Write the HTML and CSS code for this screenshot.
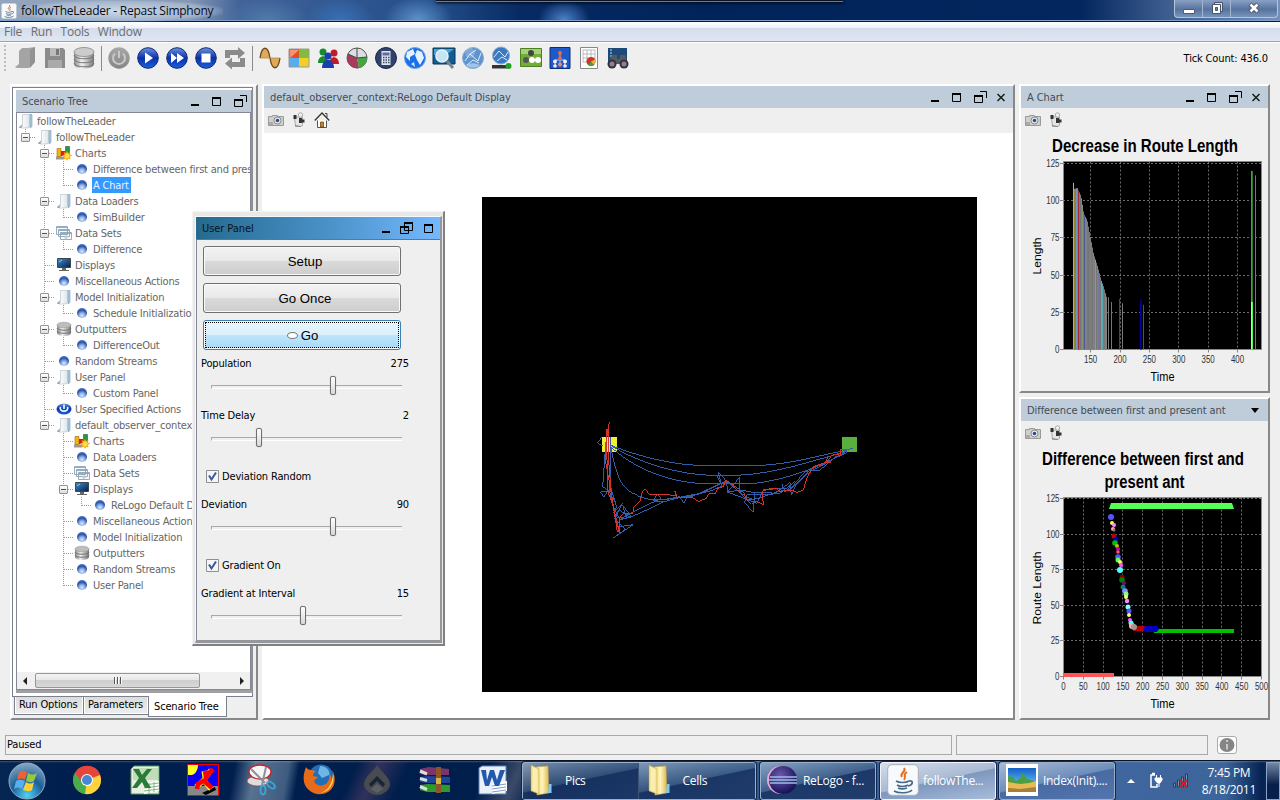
FILE: index.html
```html
<!DOCTYPE html>
<html lang="en">
<head>
<meta charset="utf-8">
<title>followTheLeader - Repast Simphony</title>
<link rel="stylesheet" href="styles.css">
</head>
<body>
<svg class="defs" width="0" height="0">
  <defs>
    <radialGradient id="gBall" cx=".5" cy=".75" r=".75"><stop offset="0" stop-color="#d8eaff"/><stop offset=".35" stop-color="#8db2e6"/><stop offset=".7" stop-color="#2d55ac"/><stop offset="1" stop-color="#5478c0"/></radialGradient>
    <linearGradient id="gBlue" x2="0" y2="1"><stop offset="0" stop-color="#6d94e0"/><stop offset=".5" stop-color="#0a2fa8"/><stop offset="1" stop-color="#1c62e0"/></linearGradient>
    <linearGradient id="gGrey" x2="0" y2="1"><stop offset="0" stop-color="#a8a8a8"/><stop offset="1" stop-color="#858585"/></linearGradient>
    <linearGradient id="gDisk" x2="1" y2="0"><stop offset="0" stop-color="#8a8a8a"/><stop offset=".4" stop-color="#f2f2f2"/><stop offset="1" stop-color="#777"/></linearGradient>
    <linearGradient id="gPage" x2="1" y2="0"><stop offset="0" stop-color="#fff"/><stop offset="1" stop-color="#dfe4e8"/></linearGradient>
    <linearGradient id="gSky" x2="0" y2="1"><stop offset="0" stop-color="#1460c8"/><stop offset=".55" stop-color="#4fa8ea"/><stop offset="1" stop-color="#b8e2fa"/></linearGradient>
    <linearGradient id="gFolder" x2="1" y2="0"><stop offset="0" stop-color="#f6e391"/><stop offset=".5" stop-color="#fff3b5"/><stop offset="1" stop-color="#dcb64f"/></linearGradient>
    <radialGradient id="gOrb" cx=".5" cy=".9" r=".9"><stop offset="0" stop-color="#4fd2f4"/><stop offset=".5" stop-color="#1c5f98"/><stop offset="1" stop-color="#86a9c4"/></radialGradient>
    <radialGradient id="gEcl" cx=".4" cy=".35" r=".7"><stop offset="0" stop-color="#6d5aa8"/><stop offset="1" stop-color="#110c55"/></radialGradient>
    <linearGradient id="gMon" x2="1" y2="1"><stop offset="0" stop-color="#3d8fd0"/><stop offset="1" stop-color="#061c44"/></linearGradient>
    <symbol id="ball" viewBox="0 0 16 16"><circle cx="8" cy="8" r="5" fill="url(#gBall)"/></symbol>
    <symbol id="page" viewBox="0 0 16 16"><path d="M4.500 1.500H12v11l-2 2.500H3l1.500-2z" fill="url(#gPage)" stroke="#bcc2c8" stroke-width=".7"/><path d="M12 1.500h2v12L12 15z" fill="#a9c9e2" stroke="#7d9db8" stroke-width=".6"/><path d="M1 14l3-2.500-.5 3.500H1.500z" fill="#9ba3aa"/></symbol>
    <symbol id="charts" viewBox="0 0 16 16"><path d="M0 11.500h8v3H0z" fill="#999"/><path d="M1 3.500h4v8H1z" fill="#f3b50c" stroke="#a26a00" stroke-width=".6"/><path d="M5 6h4v5H5z" fill="#d81d10"/><path d="M9.500 1.500h4v8h-4z" fill="#289445" stroke="#14632b" stroke-width=".6"/><path d="M11 6.500l1 2 2-1-.7 2.200 2.200.8-2.200 1.200.7 2.300-2-.8-1 2-1-2-2 .8.700-2.300-2.200-1.200 2.200-.8L8 7.500l2 1z" fill="#ffe038" stroke="#f09000" stroke-width=".7"/></symbol>
    <symbol id="sets" viewBox="0 0 16 16"><g fill="#f8fafc" stroke="#8ba3b6" stroke-width=".9"><path d="M.5 1.500h11v8H.5zM2.500 4.500h11v7h-11zM4.500 7.500h11v7h-11z"/><path d="M1 2.500h10M3 5.500h10M5 8.500h10"/></g><circle cx="10" cy="12" r="1.800" fill="#c0c9d0"/></symbol>
    <symbol id="monitor" viewBox="0 0 16 16"><path d="M1.500 1.500h13v9h-13z" fill="url(#gMon)" stroke="#394653"/><path d="M3 5l3-2" stroke="#8cd" /><path d="M6 11h4v2h3v1H3v-1h3z" fill="#666"/></symbol>
    <symbol id="db" viewBox="0 0 16 16"><path d="M1 4v8c0 4 14 4 14 0V4z" fill="url(#gDisk)"/><path d="M1 7c0 3 14 3 14 0M1 10c0 3 14 3 14 0" fill="none" stroke="#707070"/><ellipse cx="8" cy="4" rx="7" ry="2.800" fill="#bdbdbd" stroke="#999" stroke-width=".6"/></symbol>
    <symbol id="power" viewBox="0 0 16 16"><ellipse cx="8" cy="8" rx="7.500" ry="5.500" fill="url(#gBlue)"/><path d="M4.500 6c-2 5.500 9 5.500 7 0M8 3.500v4.500" fill="none" stroke="#dff" stroke-width="1.700"/></symbol>
    <symbol id="camera" viewBox="0 0 16 12"><path d="M.5 2.500h4V1.500h5v1h6v9H.5z" fill="#cfcfcf" stroke="#9a9a9a"/><circle cx="9.500" cy="6.500" r="3.500" fill="#eee" stroke="#888"/><circle cx="9.500" cy="6.500" r="1.800" fill="#234f9a"/><path d="M1 8h4v3H1z" fill="#aaa"/></symbol>
    <symbol id="film" viewBox="0 0 14 16"><path d="M2.500 5h8v8.500l-2 1h-5z" fill="#e6e6e6" stroke="#a8a8a8"/><path d="M1.500 3h3v4h-3z" fill="#333"/><circle cx="8.500" cy="3" r="2.200" fill="#f2f2f2" stroke="#aaa"/><path d="M7 6h3v5H7zM10 7.500h2.500v3H10z" fill="#333"/><path d="M3 13.500l6 1" stroke="#888"/></symbol>
    <symbol id="home" viewBox="0 0 16 16"><path d="M3.500 8v7.500h9V8" fill="#fff" stroke="#555"/><path d="M.7 8.500L8 1l7.300 7.500" fill="#f6efe4" stroke="#333" stroke-width="1.300"/><path d="M11 1.500h2v4" fill="none" stroke="#444"/><path d="M6.500 10h3v5h-3z" fill="#c78430" stroke="#653900" stroke-width=".7"/></symbol>
    <symbol id="min" viewBox="0 0 12 12"><path d="M2 10h8" stroke="#000" stroke-width="2"/></symbol>
    <symbol id="max" viewBox="0 0 12 12"><path d="M1.500 2.500h8v8h-8z" fill="none" stroke="#000"/><path d="M1 3h9" stroke="#000" stroke-width="2"/></symbol>
    <symbol id="out" viewBox="0 0 14 14"><path d="M1.500 5.500h8v7h-8zM7 1.500h6.500V8" fill="none" stroke="#000"/><path d="M1 6h9" stroke="#000" stroke-width="2"/></symbol>
    <symbol id="restore" viewBox="0 0 14 14"><path d="M.5 5.500h8v7h-8zM4.500 1.500h8v8h-8z" fill="none" stroke="#000"/><path d="M0 6h9M4 2h9" stroke="#000" stroke-width="2"/></symbol>
    <symbol id="close" viewBox="0 0 12 12"><path d="M2.500 3l7 7m0-7l-7 7" stroke="#132113" stroke-width="1.500"/></symbol>
    <symbol id="folder" viewBox="0 0 24 32"><path d="M7 3l12-1 1 27-12 2z" fill="url(#gFolder)" stroke="#c6a44a" stroke-width=".5"/><path d="M2 1l8 4v25l-8-3z" fill="#f7e69a" stroke="#b99437" stroke-width=".5"/><path d="M4 3l4 2v22l-4-1z" fill="#fff6c6" opacity=".5"/><path d="M20 20h2.500v9H19z" fill="#7ecbf0"/></symbol>
    <symbol id="java" viewBox="0 0 32 32"><rect x=".7" y=".7" width="30.600" height="30.600" rx="4" fill="#f7f9fb" stroke="#a7b2bd"/><path d="M17 4c3 4-5 5-2 9M20 8c-5 3 0 4-3 8" fill="none" stroke="#e76e20" stroke-width="2"/><path d="M9 17c3 2 10 2 13 0M10 21c3 2 8 2 11 0M11 24c2 1 6 1 9 0M22 17c5-1 4 4-1 5M7 27c5 3 15 2 18-1" fill="none" stroke="#436b8d" stroke-width="1.600"/></symbol>
  </defs>
</svg>

<header class="titlebar">
  <svg class="app-icon" width="16" height="18"><use href="#java"/></svg>
  <h1>followTheLeader - Repast Simphony</h1>
  <div class="dock-edge"></div>
  <div class="caption">
    <span><svg width="14" height="14"><path d="M1.500 7.500h11v4h-11z" fill="#fff" stroke="#555b6c"/></svg></span>
    <span><svg width="14" height="14"><path d="M4.500 .5h8v9h-8z" fill="#dfe5ef" stroke="#4b5369"/><path d="M2.500 2.500h8v9h-8z" fill="#fff" stroke="#4b5369"/><path d="M5.500 5.500h2v3h-2z" fill="#6784af" stroke="#4b5369"/></svg></span>
    <span class="wide"><svg width="14" height="14"><path d="M3 2l8 8m0-8l-8 8" stroke="#4b5369" stroke-width="4.500"/><path d="M3.500 2.500l7 7m0-7l-7 7" stroke="#fff" stroke-width="2.600"/></svg></span>
  </div>
</header>

<nav class="menubar"><span>File</span><span>Run</span><span>Tools</span><span>Window</span></nav>

<div class="toolbar">
  <i class="grip"></i>
  <svg class="t" viewBox="0 0 22 22"><path d="M4 4l3-3h6l7-1v15l-6 6H2l-2-1 4-3z" fill="#a4a4a4"/><path d="M15 3l5-3v15l-5 6z" fill="#929292"/></svg>
  <svg class="t" viewBox="0 0 22 22"><path d="M1 1h18l2 2v18H1z" fill="#8b8b8b"/><path d="M6 1h10v8H6z" fill="#bbb"/><path d="M12 2h3v6h-3z" fill="#777"/><path d="M4 13h14v8H4z" fill="#aaa"/></svg>
  <svg class="t" viewBox="0 0 22 22"><path d="M1 5v12c0 6 20 6 20 0V5z" fill="url(#gDisk)"/><path d="M1 8c0 5 20 5 20 0M1 12c0 5 20 5 20 0M1 16c0 5 20 5 20 0" fill="none" stroke="#777"/><ellipse cx="11" cy="5" rx="10" ry="4.500" fill="#ccc" stroke="#999"/></svg>
  <i class="sep"></i>
  <svg class="t" viewBox="0 0 22 22"><circle cx="11" cy="11" r="10.700" fill="url(#gGrey)"/><path d="M7 6.500a6 6 0 1 0 8 0M11 4v7" fill="none" stroke="#c9c9c9" stroke-width="2"/></svg>
  <svg class="t" viewBox="0 0 22 22"><circle cx="11" cy="11" r="10.300" fill="url(#gBlue)" stroke="#122b76"/><path d="M8 5.500v11l8-5.500z" fill="#fff"/></svg>
  <svg class="t" viewBox="0 0 22 22"><circle cx="11" cy="11" r="10.300" fill="url(#gBlue)" stroke="#122b76"/><path d="M5 6v10l6-5zM11 6v10l7-5z" fill="#fff"/></svg>
  <svg class="t" viewBox="0 0 22 22"><circle cx="11" cy="11" r="10.300" fill="url(#gBlue)" stroke="#122b76"/><path d="M6.500 6.500h9v9h-9z" fill="#fff"/></svg>
  <svg class="t" viewBox="0 0 22 22"><path d="M1 11V3h13V0l7 6-7 6V8H6v3zM21 11v9H8v2.500l-7-6 7-6V15h8v-4z" fill="#8b8b8b"/></svg>
  <i class="sep"></i>
  <svg class="t" viewBox="0 0 22 22"><path d="M1 11C3-2 9-2 11 11zM11 11c2 13 8 13 10 0z" fill="#dfaa58"/><path d="M1 11C3-2 9-2 11 11c2 13 8 13 10 0" fill="none" stroke="#68451a" stroke-width="1.300"/><path d="M1 11h20" stroke="#b58a4a" stroke-width=".8"/></svg>
  <svg class="t" viewBox="0 0 22 22"><path d="M1 2h10v9H1z" fill="#e44d27"/><path d="M11 2h10v9H11z" fill="#81bd3c"/><path d="M1 11h10v9H1z" fill="#55acf0"/><path d="M11 11h10v9H11z" fill="#f4cf27"/><path d="M1 2h20v18H1z" fill="none" stroke="#999"/><path d="M2 3h9l-9 8z" fill="#ffb191" opacity=".7"/></svg>
  <svg class="t" viewBox="0 0 22 22"><g fill="#188a31"><circle cx="6" cy="5" r="3.500"/><path d="M1 16c0-9 10-9 10 0z"/></g><g fill="#c01c25"><circle cx="17" cy="6" r="3.500"/><path d="M12 17c0-9 10-9 10 0z"/></g><g fill="#1c3fae"><circle cx="11" cy="9" r="3.600"/><path d="M5 21c0-11 12-11 12 0z"/></g></svg>
  <svg class="t" viewBox="0 0 22 22"><circle cx="11" cy="11" r="10" fill="#dcdee4" stroke="#555"/><path d="M11 11L2 7a10 10 0 0 0 11 14z" fill="#a83a5d"/><path d="M11 11l10-1a10 10 0 0 1-8 11z" fill="#43a642"/><path d="M11 1v10L2 7m9 4l10-1" fill="none" stroke="#444"/></svg>
  <svg class="t" viewBox="0 0 22 22"><circle cx="11" cy="11" r="10.500" fill="#30416c" stroke="#1b2749"/><path d="M6.500 4h9v14h-9z" fill="#dfe4ee"/><path d="M7.500 5.500h7v3h-7z" fill="#5c6f97"/><path d="M8 10.500h7M8 13h7M8 15.500h7" stroke="#3b4868" stroke-width="1.500" stroke-dasharray="1.500 1"/></svg>
  <svg class="t" viewBox="0 0 22 22"><circle cx="11" cy="11" r="10.500" fill="#1b70e6" stroke="#6fa3e6"/><path d="M3 5l6-3 2 5-5 3v4L2 10zM13 3l5 2 2 6-4 7-3-5-2-5z" fill="#e2f3ff"/><path d="M7 17l3-2 1 5z" fill="#cde7ff"/></svg>
  <svg class="t" viewBox="0 0 22 22"><path d="M0 1h22v16H0z" fill="#135c91" stroke="#0b365a"/><path d="M1 2h20l-8 6H1z" fill="#48a4d4"/><circle cx="9" cy="9" r="6" fill="#c6e4f4" stroke="#e9f2f7" stroke-width="1.600"/><path d="M14 14l6 7" stroke="#78848f" stroke-width="3"/></svg>
  <svg class="t" viewBox="0 0 22 22"><circle cx="11" cy="11" r="10.500" fill="#5e93ce" stroke="#8bacd0"/><path d="M3 14l5-7 8 7 3-8M5 18l6-5 6 3M8 7l6-4" fill="none" stroke="#dcecff"/><circle cx="8" cy="6" r="5" fill="#fff" opacity=".2"/><path d="M4 18a10 10 0 0 0 14 0 12 8 0 0 0-14 0z" fill="#cfe5fb" opacity=".6"/></svg>
  <svg class="t" viewBox="0 0 22 22"><circle cx="10" cy="8.500" r="8.500" fill="#397bc3" stroke="#8bacd0"/><path d="M3 10l5-6 6 6 3-5M6 14l5-4 5 3" fill="none" stroke="#dcecff"/><path d="M1 18h15v3.500H1z" fill="#333"/><circle cx="17.500" cy="19" r="3" fill="#20a325"/></svg>
  <svg class="t" viewBox="0 0 22 22"><path d="M.5 1.500h21v18H.5z" fill="#72ad3c" stroke="#4b8120"/><path d="M1 2h20v5H1z" fill="#a6d178"/><circle cx="11" cy="6" r="3" fill="#444"/><circle cx="6" cy="13" r="3" fill="#555"/><circle cx="12" cy="13" r="3" fill="#fff"/><circle cx="18" cy="13" r="3" fill="#fff"/></svg>
  <svg class="t" viewBox="0 0 22 22"><path d="M1 .5h20v21H1z" fill="#1d59c8" stroke="#0d2d79"/><path d="M11 6v12M6 13h10M6 13v5m10-5v5" stroke="#a9c8ff"/><g fill="#ee6a3c"><circle cx="11" cy="6" r="2"/><circle cx="11" cy="11.500" r="2"/></g><g fill="#eef"><circle cx="6" cy="14.500" r="2"/><circle cx="16" cy="14.500" r="2"/><circle cx="6" cy="19" r="1.800"/><circle cx="16" cy="19" r="1.800"/></g><circle cx="11" cy="17.500" r="2" fill="#ee8a6c"/></svg>
  <svg class="t" viewBox="0 0 22 22"><path d="M2.500.5h17v21h-17z" fill="#fff" stroke="#888"/><path d="M5 3h12v12H5zM9 3v12m4-12v12M5 7h12M5 11h12" fill="none" stroke="#aaa" stroke-width=".8"/><circle cx="13" cy="14.500" r="4.500" fill="#d3302a"/><path d="M13 14.500l4-2v4l-4 2z" fill="#e4b735"/><path d="M13 14.500l-3 3.500a5 5 0 0 0 6 0z" fill="#3fa43a"/></svg>
  <svg class="t" viewBox="0 0 22 22"><path d="M1 1h19v14H1z" fill="#1d4a78"/><path d="M3 3h2m-2 3h2m-2 3h2" stroke="#cde"/><path d="M5 8h5v4h3V8h5l3 9H1z" fill="#555b62"/><circle cx="5" cy="17" r="4.500" fill="#333"/><circle cx="17" cy="17" r="4.500" fill="#333"/><circle cx="5" cy="17" r="2.500" fill="#967aa2"/><circle cx="17" cy="17" r="2.500" fill="#967aa2"/></svg>
  <span class="ticks">Tick Count: 436.0</span>
</div>

<main class="desk">
  <section class="dock left">
    <div class="tabframe">
      <div class="pane">
        <div class="head"><span>Scenario Tree</span><svg><use href="#min"/></svg><svg><use href="#max"/></svg><svg class="big"><use href="#out"/></svg></div>
        <div class="treebox">
          <div class="tree" id="tree"></div>
          <div class="hscroll"><b class="arrow l"></b><div class="thumb"><i></i><i></i><i></i></div><b class="arrow r"></b></div>
        </div>
      </div>
    </div>
    <div class="tabs"><span>Run Options</span><span>Parameters</span><span class="on">Scenario Tree</span></div>
  </section>

  <section class="dock center">
    <div class="head"><span>default_observer_context:ReLogo Default Display</span><svg><use href="#min"/></svg><svg><use href="#max"/></svg><svg class="big"><use href="#out"/></svg><svg><use href="#close"/></svg></div>
    <div class="tools"><svg width="16" height="12"><use href="#camera"/></svg><svg width="14" height="16"><use href="#film"/></svg><svg width="16" height="16"><use href="#home"/></svg></div>
    <div class="stage">
      <svg width="495" height="495" viewBox="0 0 495 495">
        <path d="M0 0h495v495H0z"/>
        <path d="M120 240h15v15h-15z" fill="#f0f033"/><path d="M360 240h15v15h-15z" fill="#59b03c"/>
        <g transform="translate(98 213) scale(.33333)" fill="none" stroke="#345da9" stroke-width="3" shape-rendering="crispEdges">
          <path d="M90 105C190 145 290 166 370 166H540C640 162 740 130 786 124L818 115"/>
          <path d="M90 105C170 155 290 196 410 196H470C600 190 700 150 800 124"/>
          <path d="M90 108C160 175 270 222 400 222H500C620 214 730 165 800 124"/>
          <path d="M92 110C105 175 118 220 140 236 165 260 200 270 240 270 290 266 310 258 340 254 380 250 400 225 440 215 470 235 490 262 520 268 560 260 590 240 630 240 660 215 680 185 720 170L800 124"/>
          <path d="M92 80V190L88 240 100 290 120 330 150 310 190 290 230 272 250 276 300 262 340 258 440 212 480 240 524 248 520 307 494 278 500 255 575 255 630 218 634 256 650 220 690 180 800 128"/>
          <path d="M66 82L52 98 68 108M76 120L68 230 92 245 62 246 72 262 84 240 105 275 92 232 110 290 100 310 128 280 105 320 140 325 128 286 155 320 118 330 120 350 160 344 100 384 136 358 104 326 118 300 150 322 200 300 250 276 220 272 232 252 246 270 300 260 311 280 320 262 400 240 425 228 415 186 438 212 444 245 478 202 480 240 442 246 500 268 524 268 523 247 600 250 645 214 615 245 606 223"/>
          <path d="M410 195L428 232 438 210 500 268 530 280 550 240 600 235 630 238 675 184 720 180 770 138"/>
          <g stroke="#d5332d"><path d="M88 37L78 95 76 150 94 250 112 366 118 365 95 270 86 150 85 60 80 58 82 240 100 290 118 368 120 320 130 310 158 310 162 290 182 272 184 250 196 236 206 252 290 256 284 242 290 262H336L356 274 378 266 386 252H406L412 236 430 230 438 210 460 226 470 240 490 246 500 268 515 283 524 272 550 284 546 244 570 236H590L600 244 636 240 650 248 670 240 680 206 700 170 740 156 755 136 770 132 780 136 782 116 786 120H804M745 140L736 155 752 158"/></g>
        </g>
      </svg>
    </div>
  </section>

  <div class="right">
    <section class="dock chart-a">
      <div class="head"><span>A Chart</span><svg><use href="#min"/></svg><svg><use href="#max"/></svg><svg class="big"><use href="#out"/></svg><svg><use href="#close"/></svg></div>
      <div class="tools"><svg width="16" height="12"><use href="#camera"/></svg><svg width="14" height="16"><use href="#film"/></svg></div>
      <svg class="chart" id="chartA" width="247" height="257" viewBox="1021 134 247 257"></svg>
    </section>
    <section class="dock chart-b">
      <div class="head combo"><span>Difference between first and present ant</span><i></i></div>
      <div class="tools"><svg width="16" height="12"><use href="#camera"/></svg><svg width="14" height="16"><use href="#film"/></svg></div>
      <svg class="chart" id="chartB" width="247" height="270" viewBox="1021 447 247 270"></svg>
    </section>
  </div>
</main>

<aside class="panel">
  <div class="panel-in">
    <div class="head active"><span>User Panel</span><svg><use href="#min"/></svg><svg class="big"><use href="#restore"/></svg><svg><use href="#max"/></svg></div>
    <div class="form">
      <button>Setup</button><button>Go Once</button><button class="hot"><i></i>Go</button>
      <div class="val"><span>Population</span><span>275</span></div><div class="slider"><i style="left:119px"></i></div>
      <div class="val"><span>Time Delay</span><span>2</span></div><div class="slider"><i style="left:45px"></i></div>
      <div class="check"><svg width="13" height="13"><path d="M.5.5h12v12H.5z" fill="#f3f5f8" stroke="#8e8f8f"/><path d="M3 5.500l2.500 4 4.500-7" fill="none" stroke="#3e5596" stroke-width="2"/></svg>Deviation Random</div>
      <div class="val"><span>Deviation</span><span>90</span></div><div class="slider"><i style="left:119px"></i></div>
      <div class="check"><svg width="13" height="13"><path d="M.5.5h12v12H.5z" fill="#f3f5f8" stroke="#8e8f8f"/><path d="M3 5.500l2.500 4 4.500-7" fill="none" stroke="#3e5596" stroke-width="2"/></svg>Gradient On</div>
      <div class="val"><span>Gradient at Interval</span><span>15</span></div><div class="slider"><i style="left:89px"></i></div>
    </div>
  </div>
</aside>

<div class="status"><div class="s1">Paused</div><div class="s2"></div><div class="info"><svg width="18" height="16"><ellipse cx="9" cy="8" rx="7.500" ry="7" fill="#858585"/><path d="M9 3v2m0 2v5.500" stroke="#c8c8c8" stroke-width="2"/></svg></div></div>

<footer class="taskbar">
  <div class="pins">
    <svg width="38" height="38" viewBox="0 0 38 38"><circle cx="19" cy="19" r="18" fill="url(#gOrb)" stroke="#91adc5"/><path d="M11 10c3-2 5-1 8 0l-2 8c-3-2-5-2-8 0z" fill="#ef6133"/><path d="M20 11c3 2 6 2 9 0l-3 8c-3 2-5 1-8 0z" fill="#98c93c"/><path d="M8 19c3-2 6-2 9 0l-3 8c-3-2-5-2-8 0z" fill="#5aaeea"/><path d="M18 20c3 2 5 2 8 0l-2 8c-3 2-6 1-9 0z" fill="#fdcf35"/></svg>
    <svg width="28" height="28" viewBox="0 0 28 28"><circle cx="14" cy="14" r="14" fill="#e4463a"/><path d="M14 14L2 7a14 14 0 0 0 10 21z" fill="#4aad4d"/><path d="M14 14L27 9a14 14 0 0 1-15 19z" fill="#fdd43b"/><path d="M14 8h13a14 14 0 0 0-25-1l6 8z" fill="#e4463a"/><circle cx="14" cy="14" r="6" fill="#fff"/><circle cx="14" cy="14" r="5" fill="#4887d6"/></svg>
    <svg width="30" height="30" viewBox="0 0 30 30"><path d="M1 4l3-3h25v28H1z" fill="#e8f0e4" stroke="#4f9a50"/><path d="M3 3h25v12H3z" fill="#c1dcb8"/><path d="M14 18l15-2v10l-15 3z" fill="#fff"/><path d="M14 20l15-2m-15 5l15-2m-15 5l15-2M19 18v10m5-11v10" fill="none" stroke="#83b57e"/><path d="M3 4h6l3 6 5-6h5l-7 9 6 10h-6l-3-6-5 6H2l7-10z" fill="#287c35"/></svg>
    <svg width="32" height="32" viewBox="0 0 32 32"><path d="M.5.500h31v31H.5z" fill="#0d00f5" stroke="#f00"/><path d="M1 22h30v9H1z" fill="#888"/><path d="M1 1h10c0 5-3 10-7 10H1z" fill="#ffff25"/><path d="M15 29l13-6 1 3-10 5z" fill="#000"/><path d="M9 23l7-6 8-11M18 18l6 7M18 13l-1-6" fill="none" stroke="#ffff25" stroke-width="5"/><path d="M10 25l1-5 7-4 3-6 5-5M18 18l7 6M19 13l-1-6" fill="none" stroke="#f00" stroke-width="4.600"/></svg>
    <svg width="30" height="32" viewBox="0 0 30 32"><ellipse cx="12" cy="17" rx="11" ry="5" fill="#ddd" stroke="#a33" stroke-width=".7"/><ellipse cx="14" cy="8" rx="11" ry="7" fill="#f4f5f6" stroke="#c92121" stroke-width="1.300"/><path d="M5 5l14 14M20 3l-4 18" stroke="#89939c" stroke-width="2"/><ellipse cx="17" cy="26" rx="2.500" ry="4.500" fill="none" stroke="#39a6da" stroke-width="1.800"/><ellipse cx="25" cy="21" rx="2.500" ry="4.500" fill="none" stroke="#39a6da" stroke-width="1.800" transform="rotate(-50 25 21)"/></svg>
    <svg width="32" height="32" viewBox="0 0 32 32"><circle cx="18" cy="13" r="12.500" fill="#236eb9"/><path d="M17 2c6 0 11 5 9 9l-7 3-4-5z" fill="#6db7e6"/><path d="M3 3c1 2 3 3 5 3l5 1c-2 1-3 3-3 5l5 1c-1 2-3 2-4 4 2 5 9 6 13 2 2-3 3-6 2-9 3 2 3 5 2 8 2-3 3-6 1-12 5 8 3 18-4 22C14 34 3 27 1 18 0 13 1 8 3 3z" fill="#e76b18"/><path d="M30 10c2 9-3 18-13 19 8-2 12-9 13-19z" fill="#ffd15c"/></svg>
    <svg width="26" height="30" viewBox="0 0 26 30"><path d="M13 0C10 6 0 12 0 19c0 6 7 11 13 11s13-5 13-11C26 12 16 6 13 0z" fill="#484c51"/><path d="M5 19l8-8 8 8-2 3-6-6-6 6z" fill="#1a2436"/><path d="M7 24l6-5 6 5-6 4z" fill="#5d6166"/></svg>
    <svg width="32" height="28" viewBox="0 0 32 28"><path d="M1 3L10 1l20 2v6H8L1 8z" fill="#7b356b"/><path d="M1 11l8-1 22 1v6H8l-7-1z" fill="#22439a"/><path d="M1 19l8-1 22 1v7H8l-7-2z" fill="#2f9a2b"/><path d="M1 5l7 3M1 12.500l7 2M1 20.500l7 3" stroke="#ddd" stroke-width="3"/><path d="M17 1h5v26h-5z" fill="#8d552a"/><path d="M17 12h5v6h-5z" fill="#d4b63e"/></svg>
    <svg width="30" height="30" viewBox="0 0 30 30"><path d="M1 3l3-2h24v28H1z" fill="#e9f0fa" stroke="#5982b7"/><path d="M14 19l15-3v10l-15 3z" fill="#fff"/><path d="M14 21l14-2m-14 5l14-2m-14 5l14-2" fill="none" stroke="#81a0c8"/><path d="M3 5h5l1 10L12 5h4l3 10 3-10h5l-6 16h-4l-3-9-3 9H7z" fill="#2259ac"/></svg>
  </div>
  <div class="tasks">
    <div class="duo"><div class="task"><svg width="24" height="32"><use href="#folder"/></svg>Pics</div><div class="task"><svg width="24" height="32"><use href="#folder"/></svg>Cells</div></div>
    <div class="task single"><svg width="30" height="30" viewBox="0 0 30 30"><circle cx="14" cy="15" r="14" fill="#e7a8d5"/><circle cx="16" cy="15" r="14" fill="url(#gEcl)"/><path d="M3 12h27M2 15h28M3 18h27" stroke="#9dbce8" stroke-width="1.300"/></svg>ReLogo - f...</div>
    <div class="task single lit"><svg width="32" height="32"><use href="#java"/></svg>followThe...</div>
    <div class="task single pale"><svg width="32" height="32" viewBox="0 0 32 32"><path d="M0 0h32v32H0z" fill="#fff"/><path d="M2 4h28v24H2z" fill="url(#gSky)"/><path d="M2 12l5 1 3 4 3-2 4-6 4 6 4 1 5 2v4H2z" fill="#4b9e42"/><path d="M2 18l12 2 9-1 7-2v11H2z" fill="#e5ba57"/><path d="M2 24l12 1 16-2v5H2z" fill="#a97e35"/></svg>Index(Init)....</div>
  </div>
  <div class="tray">
    <svg width="8" height="4"><path d="M0 4l4-4 4 4z" fill="#fff"/></svg>
    <svg width="14" height="18"><path d="M6 3H2v12h6v-3M3 1.500h3" fill="none" stroke="#fff" stroke-width="1.500"/><path d="M6 6h7v2l-2 3H8.500L6 8zM7.500 3v3m4-3v3M10 11v4" stroke="#fff" fill="#fff"/></svg>
    <svg width="17" height="16"><path d="M1.500 10v4h2v-4zM5.500 7v7h2V7zM9.500 4v10h2V4zM13.500 1v13h2V1z" fill="#7f93ad" stroke="#2a3b52"/><path d="M8 7l7 7m0-7l-7 7" stroke="#e01818" stroke-width="2"/></svg>
  </div>
  <div class="clock"><span>7:45 PM</span><span>8/18/2011</span></div>
  <div class="peek"></div>
</footer>
<script src="main.js"></script>
</body>
</html>
```

FILE: styles.css
```css
* { box-sizing: border-box; }
body { margin: 0; width: 1280px; height: 800px; overflow: hidden; display: flex; flex-direction: column; background: #efefef; color: #000; font: 11px/16px "DejaVu Sans Condensed", "Noto Sans", sans-serif; letter-spacing: -.15px; position: relative; }
svg { display: block; flex: none; overflow: visible; }
.defs { position: absolute; }

.titlebar { height: 22px; flex: none; display: flex; align-items: flex-start; padding-left: 1px; position: relative; border-bottom: 1px solid #10172c; box-shadow: inset 0 -1px #7ea0c9;
  background: radial-gradient(ellipse 40px 22px at 268px 20px, #507ba8 0, transparent 100%), radial-gradient(ellipse 34px 22px at 340px 20px, #3870b8 0, transparent 100%), radial-gradient(ellipse 34px 24px at 418px 20px, #5d92cb 0, transparent 100%), radial-gradient(ellipse 26px 20px at 564px 20px, #4d82ca 0, transparent 100%), linear-gradient(90deg, #93a6bd 0, #8598b3 190px, #41639a 240px, #224c88 440px, #072a63 520px, #00235a 700px, #03265e 1080px, #405f91 1170px, #7490b9 1280px); }
.app-icon { margin-top: 2px; }
.titlebar h1 { margin: 0; padding: 0 10px 0 4px; font: 12px/22px "Open Sans", sans-serif; letter-spacing: -.25px; color: #080c14; background: radial-gradient(ellipse at center, rgba(214,226,240,.85) 0, rgba(190,206,226,.5) 60%, transparent 75%); }
.dock-edge { position: absolute; left: 436px; top: 0; width: 407px; height: 2px; background: #0a1225; border-bottom: 1px solid #707b8f; box-shadow: 0 1px 3px #000; }
.caption { margin-left: auto; margin-right: 2px; height: 18px; display: flex; border: 1px solid #b5c4dc; border-top: 0; border-radius: 0 0 4px 4px; background: linear-gradient(#8aa0c3, #56749f 55%, #7793bb); }
.caption span { width: 28px; display: flex; justify-content: center; padding-top: 2px; border-right: 1px solid #a4b5d0; }
.caption .wide { width: 46px; border: 0; }

.menubar { height: 20px; flex: none; display: flex; gap: 8.500px; padding-left: 4px; border-bottom: 1px solid #a0a0a0; background: linear-gradient(#fff 0, #eef1f8 30%, #d4dcec 32%, #e1e7f3 100%); font: 12px/19px "Open Sans", sans-serif; color: #6d6d6d; letter-spacing: -.22px; }
.toolbar { height: 42px; flex: none; display: flex; align-items: flex-start; gap: 7px; padding: 4px 12px 0 4px; border-top: 1px solid #fff; }
.toolbar .t { width: 22px; height: 22px; }
.grip { width: 2px; height: 28px; margin: -2px 2px 0 0; background: repeating-linear-gradient(#bdbdbd 0 2px, transparent 2px 4px); }
.sep { width: 1px; height: 25px; margin: -1px -1px 0; background: #8b8b8b; }
.ticks { margin-left: auto; line-height: 24px; }

.desk { height: 636px; flex: none; display: grid; grid-template-columns: 248px 753px 251px; column-gap: 4px; padding-left: 10px; }
.dock { border: 2px solid #fff; border-right-color: #888; border-bottom-color: #888; display: flex; flex-direction: column; min-width: 0; }
.left { padding: 1px 3px 0 0; }
.head { height: 22px; flex: none; display: flex; align-items: center; gap: 10px; padding: 0 6px; background: #bfcddb; color: #444b54; white-space: nowrap; }
.head span { margin-right: auto; padding-top: 1px; letter-spacing: -.07px; }
.head svg { width: 12px; height: 12px; }
.head .big { width: 14px; height: 14px; margin-right: -2px; }
.tabframe { height: 610px; border: 1px solid #7a8090; background: #fff; padding: 2px 0 0 3px; }
.pane { height: 603px; margin-right: -1px; border-right: 2px solid #8e9096; border-bottom: 3px solid #a0a0a4; }
.treebox { height: 578px; border: 1px solid #848896; display: flex; flex-direction: column; }
.tree { flex: 1; overflow: hidden; }
.row { height: 16px; display: flex; align-items: center; white-space: nowrap; color: #666; letter-spacing: -.2px; }
.row > svg { width: 16px; height: 16px; margin: 0 2px 0 1px; }
.row b { font-weight: normal; padding: 1px 0 0 1px; line-height: 15px; }
.row b.sel { background: #3399ff; color: #e8f3ff; padding-right: 2px; }
.cell { width: 19px; height: 16px; flex: none; display: grid; place-items: center; }
.cell + .cell + .cell { margin-right: -1px; }
.cell.v { background: repeating-linear-gradient(#999 0 1px, #fff 1px 2px) 8px 0 / 1px 16px no-repeat; }
.cell.t { background: repeating-linear-gradient(#999 0 1px, #fff 1px 2px) 8px 0 / 1px 16px no-repeat, repeating-linear-gradient(90deg, #999 0 1px, #fff 1px 2px) 9px 8px / 10px 1px no-repeat; }
.cell.e { background: repeating-linear-gradient(#999 0 1px, #fff 1px 2px) 8px 0 / 1px 9px no-repeat, repeating-linear-gradient(90deg, #999 0 1px, #fff 1px 2px) 9px 8px / 10px 1px no-repeat; }
.cell i { width: 9px; height: 9px; margin-right: 2px; border: 1px solid #919191; border-radius: 1px; background: linear-gradient(#33509c, #33509c) 1px 3px / 5px 1px no-repeat, linear-gradient(#fff, #ddd); }
.hscroll { height: 17px; display: flex; align-items: center; padding: 0 6px 0 6px; gap: 8px; background: #f0f0f0; }
.arrow { border: 4px solid transparent; width: 4px; }
.arrow.l { border-right-color: #222; border-left: 0; }
.arrow.r { border-left-color: #222; border-right: 0; margin-left: auto; }
.thumb { width: 165px; height: 15px; border: 1px solid #979797; border-radius: 2px; display: flex; justify-content: center; align-items: center; gap: 1px; background: linear-gradient(#f4f4f4, #e6e6e6 48%, #cfcfcf 50%, #d8d8d8); }
.thumb i { width: 2px; height: 7px; background: linear-gradient(90deg, #555 50%, #fff 50%); }
.tabs { display: flex; align-items: flex-start; padding-left: 2px; }
.tabs span { height: 18px; width: 70px; padding: 0 0 0 4px; white-space: nowrap; border: 1px solid #7a8090; border-top: 0; box-shadow: inset -1px 0 #fff, inset 1px -1px #fff; background: linear-gradient(#dcdcdc, #eee); }
.tabs span + span { width: 65px; border-left: 0; }
.tabs span.on { width: 79px; height: 21px; margin: -1px 0 0 -1px; padding-top: 3px; padding-left: 5px; background: #fff; border-left: 1px solid #7a8090; }

.tools { height: 25px; flex: none; display: flex; align-items: center; gap: 8px; padding: 0 4px 1px; background: #efefef; }
.stage { flex: 1; background: #fff; padding: 64px 0 0 218px; }
.right { display: flex; flex-direction: column; gap: 4px; }
.right .tools { height: 24px; padding-bottom: 0; margin-bottom: 2px; }
.chart-a { height: 309px; }
.chart-b { height: 323px; }
.combo i { border: 4px solid transparent; border-top: 5px solid #000; border-bottom: 0; margin-right: 3px; }
.chart text { font-family: "Liberation Sans", Arial, sans-serif; letter-spacing: 0; }
.chart .tick { font-size: 10px; fill: #333; }
.chart .axis { font-size: 12px; }
.chart .side { font-size: 10.5px; }
.chart .title { font-size: 18px; font-weight: bold; text-anchor: middle; }

.panel { position: absolute; left: 192px; top: 211px; width: 253px; height: 435px; background: #e8e8e8; border: 1px solid #f4f4f4; border-right: 2px solid #808080; border-bottom: 2px solid #808080; padding: 4px 1px 1px 2px; }
.panel-in { height: 427px; background: #efefef; border: 1px solid #f8f8f8; border-right: 2px solid #94979b; border-bottom: 3px solid #94979b; display: flex; flex-direction: column; }
.head.active { height: 23px; color: #06131c; background: linear-gradient(90deg, #256a8e, #4b92c9 55%, #74b9ff); gap: 10px; padding-right: 5px; border-bottom: 1px solid #5f7890; }
.head.active .big { margin: 0 -1px 0 -2px; }
.form { flex: 1; border-left: 1px solid #838998; padding: 6px 37px 0 6px; display: flex; flex-direction: column; }
.form button { height: 30px; width: 198px; margin: 0 0 7px; padding: 0 0 0 6px; border: 1px solid #707070; border-radius: 3px; font: 13.2px "Liberation Sans", sans-serif; letter-spacing: 0; color: #000; box-shadow: inset 0 0 0 1px #fafafa; background: linear-gradient(#f3f3f3, #e9e9e9 49%, #dadada 50%, #cdcdcd); }
.form .hot { margin-bottom: 5px; padding: 0 0 0 1px; border-color: #3c7fb1; outline: 1px dotted #000; outline-offset: -3px; background: linear-gradient(#eaf6fd, #d9f0fc 49%, #bee6fd 50%, #a7d9f5); display: flex; align-items: center; justify-content: center; gap: 3px; }
.hot i { width: 11px; height: 7px; border: 1px solid #777; border-radius: 50%; background: #fff; }
.val { height: 17px; width: 208px; margin-left: -2px; display: flex; justify-content: space-between; line-height: 17px; }
.slider { height: 35px; padding: 13px 0 0 8px; position: relative; }
.slider::before { content: ""; display: block; width: 190px; height: 2px; border-top: 1px solid #a8a8a8; border-left: 1px solid #a8a8a8; border-bottom: 1px solid #fff; }
.slider i { position: absolute; top: 4px; margin-left: 8px; width: 6px; height: 19px; border: 1px solid #707070; border-radius: 2px; background: linear-gradient(#fff, #d8d8d8); box-shadow: 0 0 1px #999; }
.check { height: 37px; display: flex; align-items: flex-start; gap: 3px; padding: 11px 0 0 3px; white-space: nowrap; line-height: 14px; }

.status { height: 34px; flex: none; margin-top: 6px; display: flex; align-items: center; padding: 4px 0 0 5px; gap: 4px; }
.s1, .s2 { height: 20px; border: 1px solid #a9a9a9; padding: 1px; }
.s1 { width: 947px; }
.s2 { width: 252px; }
.info { margin-left: 5px; border: 1px solid #aaa; border-radius: 3px; background: #fff; }

.taskbar { height: 40px; flex: none; display: flex; border-top: 1px solid #0b1428; color: #fff; font: 12px/17px "Open Sans", sans-serif; letter-spacing: -.3px;
  background: linear-gradient(rgba(255,255,255,.22), transparent 2px), linear-gradient(100deg, transparent 232px, #587291 252px, #3f5c80 285px, transparent 296px), linear-gradient(115deg, transparent 325px, #31325c 345px, transparent 372px, transparent 445px, #3b4a68 475px, transparent 500px), linear-gradient(90deg, #052653, #001f4e 60px, #001e4c 520px, #315c91 760px, #4267a0 1000px, #3c659b 1225px, #052252 1262px, #183968 1280px); }
.pins { width: 522px; display: grid; grid-template-columns: 54px repeat(8, 58px); align-items: center; justify-items: center; }
.pins svg:not(:first-child) { margin: 0 0 2px 7px; }
.tasks { display: flex; gap: 4px; padding-top: 1px; }
.duo, .single { height: 38px; border: 1px solid #9ab0c8; border-radius: 3px; box-shadow: 0 0 0 1px #10264c; }
.duo { display: flex; width: 234px; }
.task { width: 116px; display: flex; align-items: center; gap: 12px; padding: 0 6px 2px; white-space: nowrap; background: linear-gradient(168deg, rgba(180,200,222,.65), rgba(70,98,135,.6) 48%, rgba(24,50,97,.85) 50%, rgba(28,55,100,.85)); }
.duo .task { flex: 1; }
.duo .task + .task { border-left: 1px solid #3c5377; padding-left: 8px; }
.task.single { gap: 6px; }
.task.lit { background: linear-gradient(168deg, #d4ddeb, #a9bad3 48%, #7e97be 50%, #a9bddb); border-color: #f0f4fa; gap: 4px; }
.task.pale { background: linear-gradient(168deg, #a8bbd8, #6e8dbb 48%, #486ba3 50%, #5475ae); gap: 5px; margin-left: -1px; }
.tray { display: flex; align-items: center; gap: 14px; margin-left: 12px; }
.tray svg:last-child { margin-left: -5px; }
.clock { margin: 0 10px 0 auto; display: flex; flex-direction: column; align-items: center; padding-top: 3px; }
.peek { width: 14px; margin-top: 1px; border: 1px solid #8ba3c2; background: linear-gradient(#7187a5, #071f4b 60%); }
```

FILE: main.js
```javascript
// Each entry: guide cells, icon, label. Guides: ' ' blank, v line, t tee, e elbow, T/E tee or elbow with a toggle.
const rows = [
  ['', 'page', 'followTheLeader'],
  ['E', 'page', 'followTheLeader'],
  [' T', 'charts', 'Charts'],
  [' vt', 'ball', 'Difference between first and present ant'],
  [' ve', 'ball', 'A Chart', 'sel'],
  [' T', 'page', 'Data Loaders'],
  [' ve', 'ball', 'SimBuilder'],
  [' T', 'sets', 'Data Sets'],
  [' ve', 'ball', 'Difference'],
  [' t', 'monitor', 'Displays'],
  [' t', 'ball', 'Miscellaneous Actions'],
  [' T', 'page', 'Model Initialization'],
  [' ve', 'ball', 'Schedule Initialization'],
  [' T', 'db', 'Outputters'],
  [' ve', 'ball', 'DifferenceOut'],
  [' t', 'ball', 'Random Streams'],
  [' T', 'page', 'User Panel'],
  [' ve', 'ball', 'Custom Panel'],
  [' t', 'power', 'User Specified Actions'],
  [' E', 'page', 'default_observer_context'],
  ['  t', 'charts', 'Charts'],
  ['  t', 'ball', 'Data Loaders'],
  ['  t', 'sets', 'Data Sets'],
  ['  T', 'monitor', 'Displays'],
  ['  ve', 'ball', 'ReLogo Default Display'],
  ['  t', 'ball', 'Miscellaneous Actions'],
  ['  t', 'ball', 'Model Initialization'],
  ['  t', 'db', 'Outputters'],
  ['  t', 'ball', 'Random Streams'],
  ['  e', 'ball', 'User Panel'],
];
document.getElementById('tree').innerHTML = rows.map(([g, icon, label, sel]) => {
  const cells = [...g].map(c => {
    const toggle = c === 'T' || c === 'E';
    return `<span class="cell ${c.trim().toLowerCase()}">${toggle ? '<i></i>' : ''}</span>`;
  }).join('');
  return `<div class="row">${cells}<svg><use href="#${icon}"/></svg><b class="${sel || ''}">${label}</b></div>`;
}).join('');

// Black plot area with dashed grid, tick marks and tick labels.
function frame(o) {
  const X = v => o.x0 + v * o.kx, Y = v => o.y0 - v * o.ky;
  let s = `<path d="M1063.500 ${o.top}H1261.500V${o.y0}H1063.500z" fill="#000" stroke="#888"/>`;
  for (const v of o.xt) {
    const w = String(v).length * 4.400, x = Math.round(X(v)) + .5;
    s += `<path d="M${x} ${o.top}V${o.y0}" stroke="#909090" stroke-dasharray="2 2" opacity=".75"/><path d="M${x} ${o.y0}v3" stroke="#888"/>`;
    s += `<text class="tick" x="${X(v) + .5 - w / 2}" y="${o.y0 + 13.500}" textLength="${w}" lengthAdjust="spacingAndGlyphs">${v}</text>`;
  }
  for (const v of [0, 25, 50, 75, 100, 125]) {
    const w = String(v).length * 4.400, y = Math.round(Y(v) - .5) + .5;
    s += `<path d="M1063 ${y}H1261" stroke="#909090" stroke-dasharray="2 2" opacity=".75"/><path d="M1060 ${y}h3" stroke="#888"/>`;
    s += `<text class="tick" x="${1059.500 - w}" y="${y + 3.500}" textLength="${w}" lengthAdjust="spacingAndGlyphs">${v}</text>`;
  }
  return s;
}

const y0a = 349.500;
let a = `<text class="title" x="1145" y="152" textLength="186" lengthAdjust="spacingAndGlyphs">Decrease in Route Length</text>`;
a += frame({ x0: 1002, kx: .5875, y0: y0a, ky: 1.488, top: 161.500, xt: [150, 200, 250, 300, 350, 400] });
const hull = [[1073, 112], [1074, 108], [1077, 108.5], [1080.7, 103], [1083.3, 91.5], [1086.7, 87], [1089.3, 78], [1093.3, 64], [1097.3, 55.6], [1100.7, 46.7], [1103.3, 42], [1107, 33]];
const tint = { 1073: '#a8a8dc', 1074: '#978536', 1076: '#6f98c4', 1078: '#a42c37', 1082: '#87946c', 1084: '#4b57a0', 1089: '#96706e', 1095: '#9a9a68', 1098: '#7777a0', 1101: '#a3a34a', 1102: '#56a6b0' };
for (let x = 1073; x < 1107; x++) {
  const i = hull.findIndex(p => p[0] > x), p = hull[i - 1], q = hull[i];
  const v = p[1] + (q[1] - p[1]) * (x - p[0]) / (q[0] - p[0]);
  const g = 118 + (x * 7) % 4 * 4;
  a += `<path d="M${x + .5} ${y0a}V${y0a - v * 1.488}" stroke="${tint[x] || `rgb(${g},${g},${g})`}"/>`;
}
for (const [x, v, c] of [[1108, 35, '#777'], [1111, 32, '#777'], [1119, 34, '#c01414'], [1122, 31, '#777'], [1140, 33, '#0000a0'], [1141, 33, '#000070'], [1143, 30, '#555'], [1251, 120, '#539553'], [1252, 120, '#307830'], [1251, 32, '#a0ffa0'], [1252, 32, '#50ff50'], [1255, 117, '#777']])
  a += `<path d="M${x + .5} ${y0a}V${y0a - v * 1.488}" stroke="${c}"/>`;
a += `<text class="axis" x="1150.500" y="380.500" textLength="24" lengthAdjust="spacingAndGlyphs">Time</text><text class="axis side" transform="translate(1041 274.500) rotate(-90)" textLength="37" lengthAdjust="spacingAndGlyphs">Length</text>`;
document.getElementById('chartA').innerHTML = a;

const y0b = 676.500;
let b = `<text class="title" x="1143" y="465" textLength="202" lengthAdjust="spacingAndGlyphs">Difference between first and</text><text class="title" x="1144.500" y="488" textLength="80" lengthAdjust="spacingAndGlyphs">present ant</text>`;
b += frame({ x0: 1063, kx: .396, y0: y0b, ky: 1.424, top: 497.500, xt: [0, 50, 100, 150, 200, 250, 300, 350, 400, 450, 500] });
b += '<path d="M1109 509l2-6h121l2 6z" fill="#55ff55"/><path d="M1154 629h80v4h-80z" fill="#00c000"/><path d="M1063 673h51v4h-51z" fill="#ff5555"/>';
b += '<path d="M1133 626h13v5h-13z" fill="#c00000"/><path d="M1143 629l2-3h12l2 3-2 3h-12z" fill="#0000c0"/>';
const dots = [[1111, 517, 3, '#5555ff'], [1112, 523, 2, '#ffff55'], [1114, 525, 2, '#ff88ff'], [1113, 529, 2, '#ffafaf'], [1114, 530, 1.500, '#808080'], [1114, 536, 2.500, '#c00000'], [1116, 539, 2.500, '#0000c0'], [1115, 543, 2.800, '#00c000'], [1117, 546, 2, '#c0c000'], [1118, 549, 2, '#c000c0'], [1118, 552, 1.800, '#ff5555'], [1118, 557, 2.800, '#5555ff'], [1118, 560, 2.500, '#55ff55'], [1120, 562, 2, '#ffff55'], [1121, 565, 2, '#ff55ff'], [1120, 570, 3, '#55ffff'], [1122, 577, 2.500, '#800000'], [1122, 580, 2.800, '#008000'], [1124, 583, 2, '#800080'], [1123, 587, 2.500, '#008080'], [1125, 591, 2.800, '#8888ff'], [1126, 594, 2.500, '#88ff88'], [1126, 597, 2, '#ffff88'], [1127, 601, 2.200, '#ff88ff'], [1128, 607, 2.500, '#88ffff'], [1129, 611, 2.500, '#5555ff'], [1129, 615, 2, '#ffff55'], [1130, 620, 2, '#ff55ff'], [1131, 623, 2.500, '#55ffff'], [1132, 626, 3, '#ffafaf'], [1134, 627, 3, '#999']];
for (const [x, y, r, c] of dots) b += `<circle cx="${x}" cy="${y}" r="${r}" fill="${c}"/>`;
b += `<text class="axis" x="1150.500" y="707.500" textLength="24" lengthAdjust="spacingAndGlyphs">Time</text><text class="axis side" transform="translate(1041 624.500) rotate(-90)" textLength="73" lengthAdjust="spacingAndGlyphs">Route Length</text>`;
document.getElementById('chartB').innerHTML = b;
```
